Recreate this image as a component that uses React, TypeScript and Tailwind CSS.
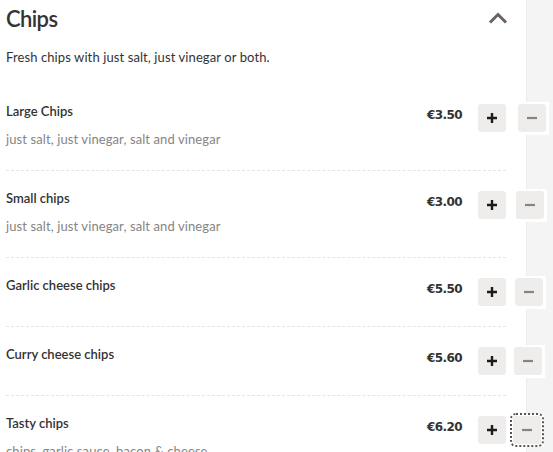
import React from "react";

type Item = {
  name: string;
  desc?: string;
  price: string;
  gapCls: string;
  focus?: boolean;
};

const items: Item[] = [
  { name: "Large Chips", desc: "just salt, just vinegar, salt and vinegar", price: "€3.50", gapCls: "ml-[12px]" },
  { name: "Small chips", desc: "just salt, just vinegar, salt and vinegar", price: "€3.00", gapCls: "ml-[10px]" },
  { name: "Garlic cheese chips", price: "€5.50", gapCls: "ml-[9px]" },
  { name: "Curry cheese chips", price: "€5.60", gapCls: "ml-[8px]" },
  { name: "Tasty chips", desc: "chips, garlic sauce, bacon & cheese", price: "€6.20", gapCls: "ml-[7px]", focus: true },
];

function Plus() {
  return (
    <svg width="12" height="12" viewBox="0 0 12 12">
      <path d="M6 1v10M1 6h10" stroke="#1f1a1a" strokeWidth="2.4" />
    </svg>
  );
}

function Minus() {
  return (
    <svg width="12" height="12" viewBox="0 0 12 12">
      <path d="M1 6h10" stroke="#8a8282" strokeWidth="2.2" />
    </svg>
  );
}

function Row({ item, first }: { item: Item; first: boolean }) {
  return (
    <div
      className={`flex items-start pb-[21px] ${
        first ? "pt-[18px]" : "pt-[17px] border-t border-dashed border-[#e4e4e4]"
      }`}
    >
      <div className="flex-1 min-h-[30px]">
        <div className="text-[13px] leading-5 font-semibold text-[#333]">{item.name}</div>
        {item.desc && (
          <div className="mt-2 text-[13px] leading-5 font-normal tracking-[0.1px] text-[#858585]">{item.desc}</div>
        )}
      </div>
      <div className="flex items-start h-[30px] mr-[-40px]">
        <div
          className="mt-[4px] w-[60px] text-right leading-5 text-[12px] font-bold tracking-[-0.6px] text-[#333]"
          style={{ fontFamily: '"DejaVu Sans", sans-serif' }}
        >
          {item.price}
        </div>
        <button className="ml-[16px] mt-[3px] w-[28px] h-[28px] rounded-[3px] bg-[#efecec] flex items-center justify-center">
          <Plus />
        </button>
        <div className="w-[40px] shrink-0 flex">
          <div className={`${item.gapCls} shrink-0 mt-[1px] pt-[2px] pb-[3px] pr-[3px] bg-white`}>
            <button
              className={`w-[28px] h-[28px] rounded-[3px] bg-[#efecec] flex items-center justify-center ${
                item.focus ? "outline-2 outline-dotted outline-[#555] outline-offset-[1px]" : ""
              }`}
            >
              <Minus />
            </button>
          </div>
        </div>
      </div>
    </div>
  );
}

export default function App() {
  return (
    <div
      className="flex h-[452px] w-[553px] overflow-hidden bg-[#f4f4f4]"
      style={{ fontFamily: 'Lato, "Noto Sans", sans-serif' }}
    >
      <div className="w-[527px] shrink-0 bg-white border-r border-[#ececec]">
        <div className="pl-[6px] pr-[20px]">
          <div className="flex items-center justify-between pt-[4px] h-[34px]">
            <h1 className="text-[22px] leading-[30px] font-semibold tracking-[-0.6px] text-[#333]">Chips</h1>
            <svg width="20" height="12" viewBox="0 0 20 12" className="mt-[-3px] mr-[-2px]">
              <path d="M2 10.5L10 2.5L18 10.5" fill="none" stroke="#6b6161" strokeWidth="3" />
            </svg>
          </div>
          <p className="mt-[13px] text-[13px] leading-5 tracking-[0.1px] text-[#333]">
            Fresh chips with just salt, just vinegar or both.
          </p>
          <div className="mt-[16px]">
            {items.map((it, i) => (
              <Row key={it.name} item={it} first={i === 0} />
            ))}
          </div>
        </div>
      </div>
    </div>
  );
}
